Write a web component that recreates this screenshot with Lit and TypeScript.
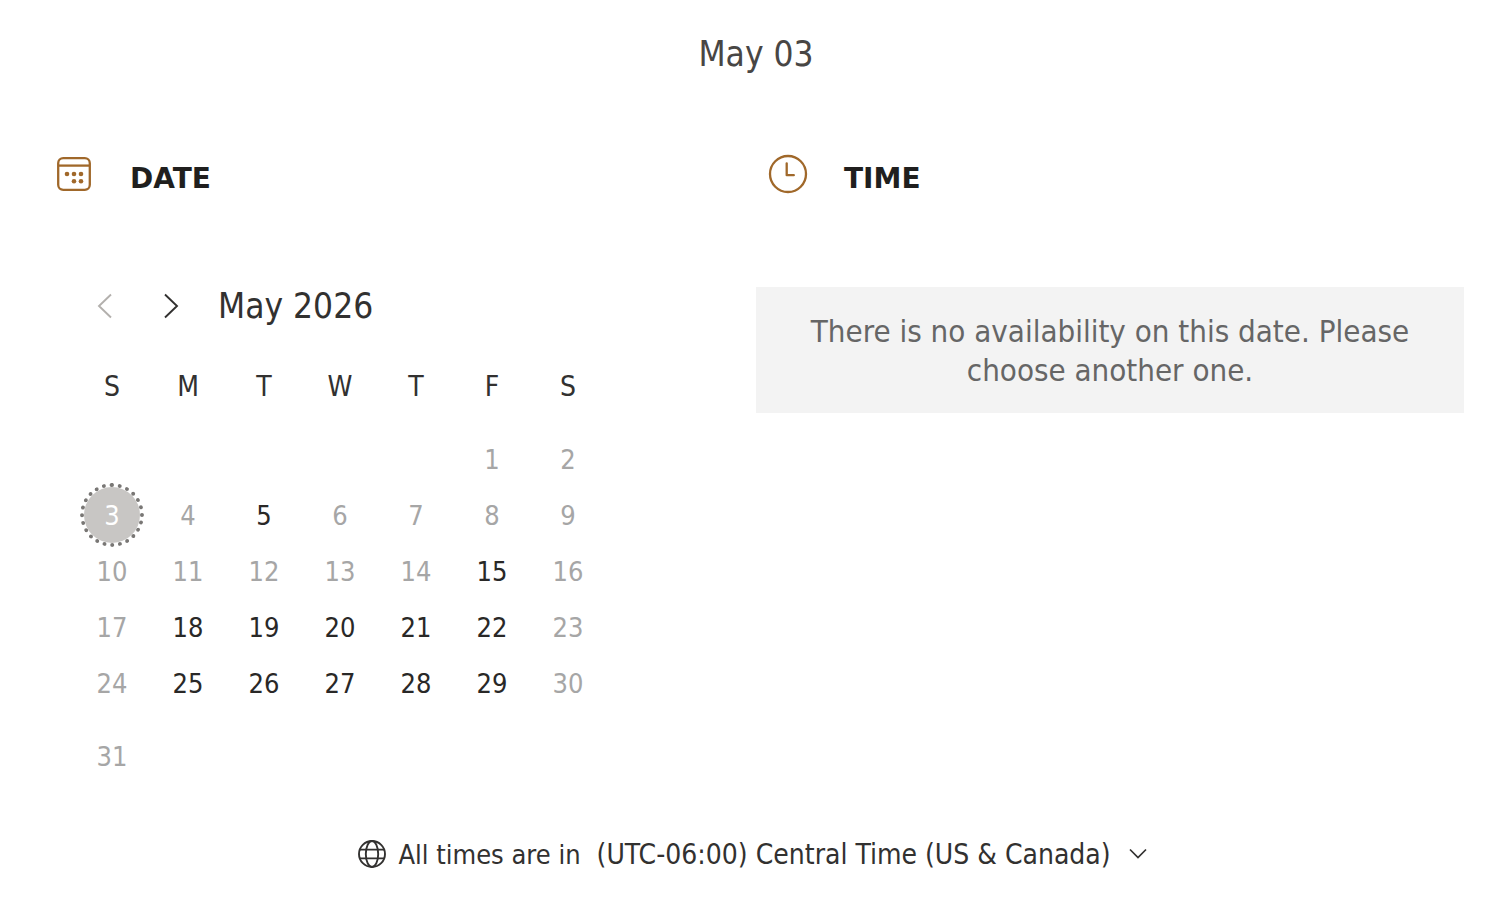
import { LitElement, html, svg, css } from "lit";
import { customElement, state } from "lit/decorators.js";
import { classMap } from "lit/directives/class-map.js";

const DAY_NAMES = ["Sunday", "Monday", "Tuesday", "Wednesday", "Thursday", "Friday", "Saturday"];
const OPEN_DAYS = new Set([5, 15, 18, 19, 20, 21, 22, 25, 26, 27, 28, 29]);
const FIRST_WEEKDAY = 5;
const DAYS_IN_MONTH = 31;

const weeks: (number | null)[][] = [];
for (let start = 1 - FIRST_WEEKDAY; start <= DAYS_IN_MONTH; start += 7) {
  weeks.push(
    Array.from({ length: 7 }, (_, i) => {
      const day = start + i;
      return day >= 1 && day <= DAYS_IN_MONTH ? day : null;
    })
  );
}

const calendarIcon = html`<svg class="icon" viewBox="0 0 40 40" aria-hidden="true">
  <g fill="none" stroke="currentColor" stroke-width="2.3">
    <rect x="4.2" y="4.2" width="31.6" height="31.6" rx="5" />
    <path d="M4 11.6H36" />
  </g>
  <g fill="currentColor">
    ${[[13, 20], [20, 20], [27, 20], [20, 27.2], [27, 27.2]].map(
      ([x, y]) => svg`<circle cx=${x} cy=${y} r="2.3" />`
    )}
  </g>
</svg>`;

const clockIcon = html`<svg class="icon" viewBox="0 0 40 40" aria-hidden="true">
  <g fill="none" stroke="currentColor" stroke-width="2.3" stroke-linecap="round" stroke-linejoin="round">
    <circle cx="20" cy="20" r="18" />
    <path d="M18.7 9.3V21.2H25.8" />
  </g>
</svg>`;

const globeIcon = html`<svg class="globe" viewBox="0 0 28 28" aria-hidden="true">
  <g fill="none" stroke="currentColor" stroke-width="1.9">
    <circle cx="14" cy="14" r="13" />
    <ellipse cx="14" cy="14" rx="6.2" ry="13" />
    <path d="M2 9.6H26M2 18.4H26" />
  </g>
</svg>`;

@customElement("app-root")
export class AppRoot extends LitElement {
  @state() private selected = 3;

  static styles = css`
    :host {
      display: block;
      font-family: "DejaVu Sans Condensed", "Noto Sans", sans-serif;
      font-size: 27px;
      line-height: 40px;
      color: #323130;
      background: #fff;
    }
    .page {
      padding: 32px 32px 40px 48px;
    }
    .summary {
      margin: 0;
      text-align: center;
      font-size: 35px;
      line-height: 44px;
      color: #484644;
    }
    .columns {
      display: grid;
      grid-template-columns: 1fr 1fr;
      padding-top: 76px;
    }
    .heading {
      display: flex;
      align-items: flex-start;
      gap: 36px;
      margin: 0;
      padding-left: 6px;
      height: 60px;
      font-family: "DejaVu Sans", sans-serif;
      font-size: 28px;
      line-height: 54px;
      font-weight: 700;
      color: #201f1e;
    }
    .time .heading {
      padding-left: 12px;
    }
    .icon {
      width: 40px;
      height: 40px;
      margin-top: 2px;
      color: #a0682a;
    }
    .bar {
      display: flex;
      align-items: center;
      padding: 72px 0 0 24px;
    }
    .nav {
      display: flex;
      justify-content: center;
      align-items: center;
      width: 66px;
      height: 44px;
      padding: 0;
      border: 0;
      background: none;
      color: #323130;
    }
    .nav:disabled {
      color: #b3b0ad;
    }
    .chevron {
      width: 16px;
      height: 26px;
    }
    .month {
      margin: 0 0 0 14px;
      font-size: 35px;
      line-height: 44px;
      font-weight: 400;
    }
    .days {
      margin: 13px 0 0 26px;
      width: 532px;
      table-layout: fixed;
      border-collapse: collapse;
    }
    .days th,
    .days td {
      box-sizing: border-box;
      padding: 0;
      height: 56px;
      text-align: center;
      font-weight: 400;
    }
    .days th,
    .days tr:last-child td {
      height: 90px;
    }
    .days th {
      padding-top: 2px;
      font-size: 28px;
    }
    .day {
      display: block;
      width: 56px;
      height: 56px;
      margin: 0 auto;
      padding: 2px 0 0;
      border: 0;
      border-radius: 50%;
      background: none;
      font: inherit;
      color: #292827;
    }
    .day:disabled {
      color: #a6a6a6;
    }
    .day.selected {
      color: #fff;
      background: #c8c6c4;
      outline: 4px dotted #797775;
    }
    .notice {
      margin: 75px 0 0;
      padding: 25px 40px 23px;
      background: #f3f3f3;
      color: #666;
      font-size: 31px;
      line-height: 39px;
      text-align: center;
    }
    .zone {
      display: flex;
      justify-content: center;
      align-items: center;
      padding: 32px 6px 0 0;
    }
    .zone label,
    .picker {
      padding: 2px 0 0;
    }
    .globe {
      width: 28px;
      height: 28px;
      margin-right: 12px;
    }
    .picker {
      appearance: none;
      border: 0;
      margin: 0 0 0 16px;
      background: none;
      font: inherit;
      font-size: 28px;
      color: inherit;
    }
    .down {
      width: 20px;
      height: 12px;
      margin-left: 16px;
    }
  `;

  private day(day: number | null) {
    if (day === null) return html`<td></td>`;
    const selected = day === this.selected;
    return html`<td>
      <button
        class=${classMap({ day: true, selected })}
        ?disabled=${!selected && !OPEN_DAYS.has(day)}
        aria-pressed=${selected ? "true" : "false"}
        @click=${() => (this.selected = day)}
      >${day}</button>
    </td>`;
  }

  render() {
    return html`<main class="page">
      <p class="summary">May ${String(this.selected).padStart(2, "0")}</p>
      <div class="columns">
        <section class="date">
          <h2 class="heading">${calendarIcon}<span>DATE</span></h2>
          <div class="bar">
            <button class="nav" aria-label="Previous month" disabled>
              <svg class="chevron" viewBox="0 0 16 26" aria-hidden="true">
                <path d="M14 1.5L2 13L14 24.5" fill="none" stroke="currentColor" stroke-width="1.9" />
              </svg>
            </button>
            <button class="nav" aria-label="Next month">
              <svg class="chevron" viewBox="0 0 16 26" aria-hidden="true">
                <path d="M2 1.5L14 13L2 24.5" fill="none" stroke="currentColor" stroke-width="1.9" />
              </svg>
            </button>
            <h3 class="month">May 2026</h3>
          </div>
          <table class="days" aria-label="May 2026">
            <thead>
              <tr>${DAY_NAMES.map((n) => html`<th scope="col" abbr=${n}>${n[0]}</th>`)}</tr>
            </thead>
            <tbody>
              ${weeks.map((week) => html`<tr>${week.map((d) => this.day(d))}</tr>`)}
            </tbody>
          </table>
        </section>
        <section class="time">
          <h2 class="heading">${clockIcon}<span>TIME</span></h2>
          ${OPEN_DAYS.has(this.selected)
            ? null
            : html`<p class="notice">There is no availability on this date. Please choose another one.</p>`}
        </section>
      </div>
      <div class="zone">
        ${globeIcon}
        <label for="zone">All times are in</label>
        <select class="picker" id="zone">
          <option>(UTC-06:00) Central Time (US &amp; Canada)</option>
        </select>
        <svg class="down" viewBox="0 0 20 12" aria-hidden="true">
          <path d="M2 1.5L10 9.5L18 1.5" fill="none" stroke="currentColor" stroke-width="1.7" />
        </svg>
      </div>
    </main>`;
  }
}
